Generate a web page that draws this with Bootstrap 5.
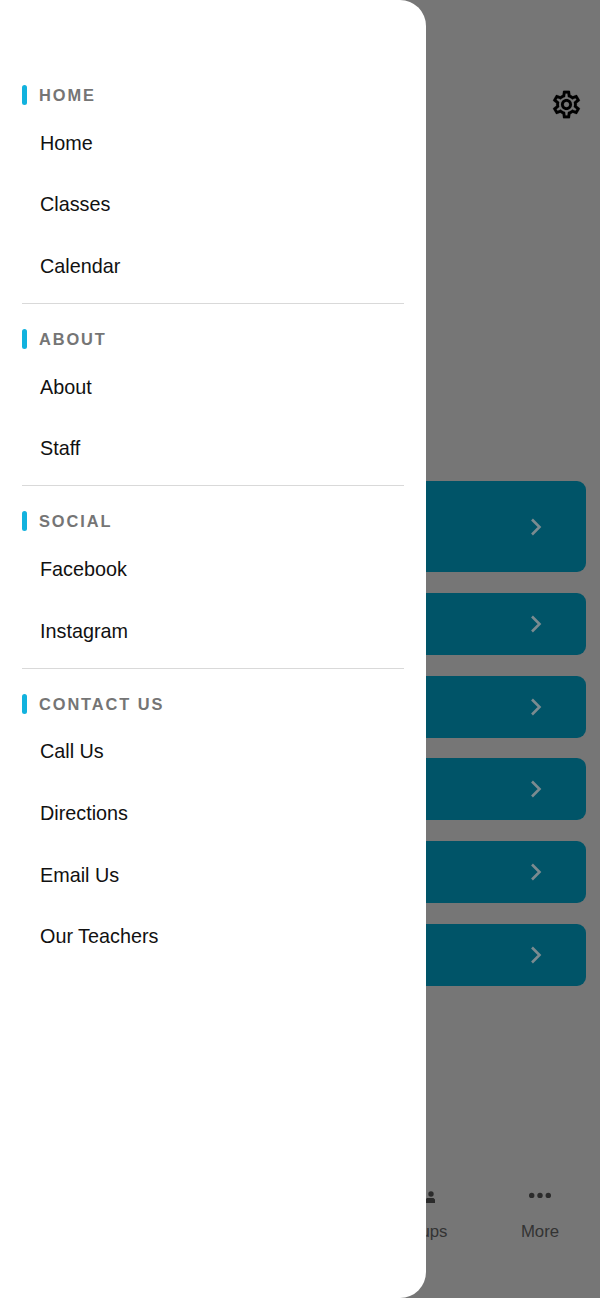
<!DOCTYPE html>
<html lang="en">

<head>
  <meta charset="UTF-8">
  <title>Menu</title>
  <link href="https://cdn.jsdelivr.net/npm/bootstrap@5.3.3/dist/css/bootstrap.min.css" rel="stylesheet">
  <style>
    body {
      font-family: "Liberation Sans", Arial, sans-serif;
      background: #767676;
      height: 1298px;
      overflow: hidden;
    }

    .stage {
      height: 1298px;
      padding: 88px 14px 0;
    }

    .gear-row {
      height: 33px;
      margin-bottom: 360px;
    }

    .gear-row svg {
      margin-right: 3px;
    }

    .tile {
      height: 62px;
      background: #005468;
      border-radius: 9px;
      margin-bottom: 20.75px;
      padding-right: 44px;
    }

    .tile-big {
      height: 91px;
    }

    .tabbar {
      margin: 0 -14px;
      height: 122px;
      color: #333;
      font-size: 16.8px;
    }

    .tab-item {
      width: 120px;
      padding-top: 7px;
    }

    .tab-icon {
      height: 24px;
      margin-bottom: 12px;
    }

    .drawer {
      position: absolute;
      top: 0;
      left: 0;
      width: 426px;
      height: 1298px;
      background: #fff;
      border-radius: 0 26px 26px 0;
      padding: 85px 22px 0;
    }

    .drawer-head {
      height: 20px;
      margin-bottom: 7px;
      color: #757575;
      font-size: 16.4px;
      font-weight: 700;
      letter-spacing: 1.9px;
      line-height: 22px;
    }

    .head-bar {
      width: 5px;
      height: 20px;
      background: #12b2de;
      border-radius: 3px;
      margin-right: 12px;
    }

    .drawer-link {
      height: 61.7px;
      padding-top: 1px;
      padding-left: 18px;
      color: #111;
      font-size: 19.8px;
      text-decoration: none;
    }

    .drawer-line {
      margin: 6px 0 25px;
      border-top: 1px solid #d9d9d9;
      opacity: 1;
    }
  </style>
</head>

<body class="position-relative">

  <!-- page behind the menu -->
  <div class="stage d-flex flex-column">
    <div class="gear-row d-flex justify-content-end">
      <svg width="33" height="33" viewBox="0 0 24 24" fill="#000" stroke="#000" stroke-width=".15">
        <path d="M19.43 12.98c.04-.32.07-.64.07-.98 0-.34-.03-.66-.07-.98l2.11-1.65c.19-.15.24-.42.12-.64l-2-3.46c-.09-.16-.26-.25-.44-.25-.06 0-.12.01-.17.03l-2.49 1c-.52-.4-1.08-.73-1.69-.98l-.38-2.65C14.46 2.18 14.25 2 14 2h-4c-.25 0-.46.18-.49.42l-.38 2.65c-.61.25-1.17.59-1.69.98l-2.49-1c-.06-.02-.12-.03-.18-.03-.17 0-.34.09-.43.25l-2 3.46c-.13.22-.07.49.12.64l2.11 1.65c-.04.32-.07.65-.07.98 0 .33.03.66.07.98l-2.11 1.65c-.19.15-.24.42-.12.64l2 3.46c.09.16.26.25.44.25.06 0 .12-.01.17-.03l2.49-1c.52.4 1.08.73 1.69.98l.38 2.65c.03.24.24.42.49.42h4c.25 0 .46-.18.49-.42l.38-2.65c.61-.25 1.17-.59 1.69-.98l2.49 1c.06.02.12.03.18.03.17 0 .34-.09.43-.25l2-3.46c.12-.22.07-.49-.12-.64l-2.11-1.65zm-1.98-1.71c.04.31.05.52.05.73 0 .21-.02.43-.05.73l-.14 1.13.89.7 1.08.84-.7 1.21-1.27-.51-1.04-.42-.9.68c-.43.32-.84.56-1.25.73l-1.06.43-.16 1.13-.2 1.35h-1.4l-.19-1.35-.16-1.13-1.06-.43c-.43-.18-.83-.41-1.23-.71l-.91-.7-1.06.43-1.27.51-.7-1.21 1.08-.84.89-.7-.14-1.13c-.03-.31-.05-.54-.05-.74s.02-.43.05-.73l.14-1.13-.89-.7-1.08-.84.7-1.21 1.27.51 1.04.42.9-.68c.43-.32.84-.56 1.25-.73l1.06-.43.16-1.13.2-1.35h1.39l.19 1.35.16 1.13 1.06.43c.43.18.83.41 1.23.71l.91.7 1.06-.43 1.27-.51.7 1.21-1.07.85-.89.7.14 1.13zM12 8c-2.21 0-4 1.79-4 4s1.79 4 4 4 4-1.79 4-4-1.79-4-4-4zm0 6c-1.1 0-2-.9-2-2s.9-2 2-2 2 .9 2 2-.9 2-2 2z" />
      </svg>
    </div>

    <div id="tiles"></div>

    <div class="tabbar mt-auto d-flex justify-content-end">
      <div class="tab-item text-center">
        <div class="tab-icon">
          <svg width="32" height="24" viewBox="0 0 32 24" fill="#2b2b2b">
            <circle cx="27" cy="9" r="2.700" />
            <path d="M21.500 18v-3.500l1.500-1.500h6.500l1.500 1.500v3.500zM17 18v-3l2.500-1.500v4.500z" />
          </svg>
        </div>
        <div>Groups</div>
      </div>
      <div class="tab-item text-center">
        <div class="tab-icon">
          <svg width="24" height="24" viewBox="0 0 24 24" fill="#2b2b2b">
            <circle cx="3.700" cy="10.400" r="2.700" />
            <circle cx="12" cy="10.400" r="2.700" />
            <circle cx="20.300" cy="10.400" r="2.700" />
          </svg>
        </div>
        <div>More</div>
      </div>
    </div>
  </div>

  <!-- side menu -->
  <nav class="drawer" id="drawer"></nav>

  <script>
    const sections = [
      { title: "HOME", links: ["Home", "Classes", "Calendar"] },
      { title: "ABOUT", links: ["About", "Staff"] },
      { title: "SOCIAL", links: ["Facebook", "Instagram"] },
      { title: "CONTACT US", links: ["Call Us", "Directions", "Email Us", "Our Teachers"] }
    ];

    document.getElementById("drawer").innerHTML = sections.map((s, i) => `
      <div class="drawer-head d-flex align-items-center"><span class="head-bar"></span>${s.title}</div>
      ${s.links.map(l => `<a class="drawer-link d-flex align-items-center" href="#">${l}</a>`).join('')}
      ${i < sections.length - 1 ? '<hr class="drawer-line">' : ''}
    `).join('');

    const chevron = `<svg width="12" height="18" viewBox="0 0 12 18" fill="none" stroke="#7b8b90" stroke-width="2.600"><path d="M2 1.500 9.500 9 2 16.500" /></svg>`;
    let tiles = '';
    for (let i = 0; i < 6; i++) {
      tiles += `<div class="tile ${i === 0 ? 'tile-big' : ''} d-flex align-items-center justify-content-end">${chevron}</div>`;
    }
    document.getElementById("tiles").innerHTML = tiles;
  </script>
  <script src="https://cdn.jsdelivr.net/npm/bootstrap@5.3.3/dist/js/bootstrap.bundle.min.js"></script>

</body>

</html>
